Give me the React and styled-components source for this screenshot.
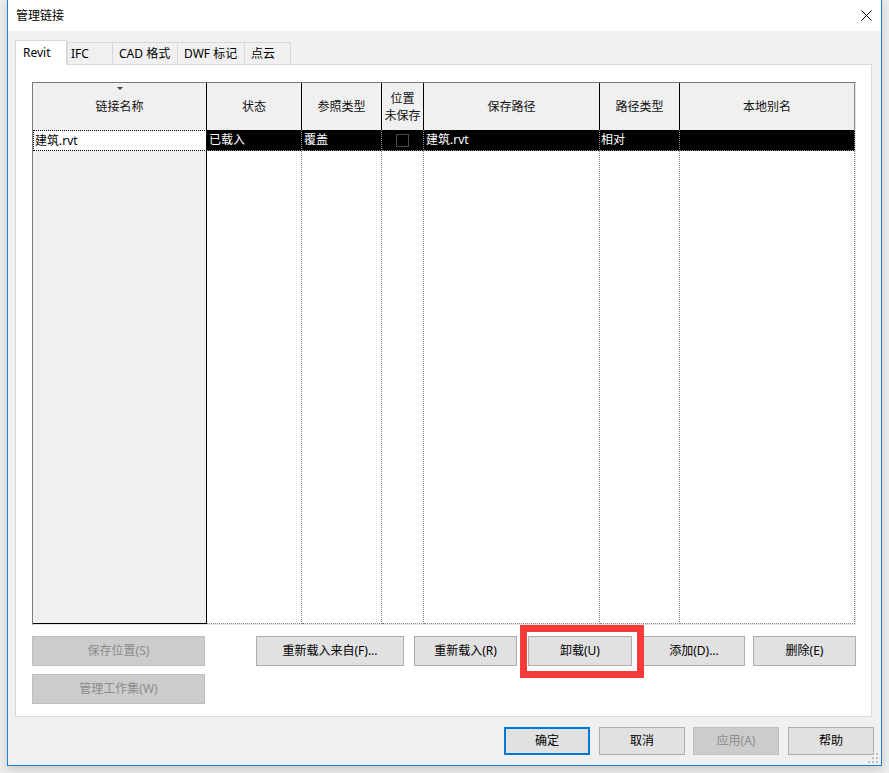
import React from 'react';
import styled, { createGlobalStyle } from 'styled-components';

const Global = createGlobalStyle`
  html, body { margin: 0; padding: 0; }
  body {
    width: 889px; height: 773px; overflow: hidden;
    background: #ededed;
    font-family: "Noto Sans", "Noto Sans CJK SC", sans-serif;
    font-size: 12px; color: #000;
  }
  * { box-sizing: border-box; }
`;

const Page = styled.div`
  width: 889px;
  height: 773px;
  padding-left: 7px;
`;

const Window = styled.div`
  position: relative;
  width: 875px;
  height: 766px;
  display: flex;
  flex-direction: column;
  background: #f0f0f0;
  border: 1px solid #1c7fd6;
  border-top: none;
  box-shadow: 0 3px 9px rgba(0, 0, 0, 0.16);
`;

const TitleBar = styled.div`
  height: 31px;
  flex: none;
  background: #fff;
  display: flex;
  align-items: center;
  justify-content: space-between;
  padding: 0 9px 0 8px;
  line-height: 16px;
`;

const Body = styled.div`
  flex: 1;
  display: flex;
  flex-direction: column;
  padding: 9px 7px 10px 7px;
`;

const TabStrip = styled.div`
  position: relative;
  z-index: 1;
  height: 24px;
  display: flex;
  align-items: flex-end;
`;

const Tab = styled.div`
  width: ${p => p.$w}px;
  height: ${p => (p.$active ? 25 : 22)}px;
  margin-bottom: ${p => (p.$active ? -1 : 0)}px;
  margin-left: ${p => p.$ml || 0}px;
  padding-left: ${p => p.$pl}px;
  padding-top: ${p => (p.$active ? 0 : 1)}px;
  display: flex;
  align-items: center;
  background: ${p => (p.$active ? '#fff' : '#f0f0f0')};
  border: 1px solid #d9d9d9;
  border-bottom: none;
  white-space: nowrap;
  line-height: 16px;
`;

const Panel = styled.div`
  height: 653px;
  margin-right: 2px;
  background: #fff;
  border: 1px solid #d9d9d9;
  padding: 17px 15px 12px 16px;
  display: flex;
  flex-direction: column;
`;

const COLS = '174px 95px 80px 42px 176px 80px 175px';

const GridBox = styled.div`
  width: 824px;
  height: 543px;
  border: 1px solid;
  border-color: #7d7d7d #e3e3e3 #e3e3e3 #7d7d7d;
  display: flex;
  flex-direction: column;
`;

const HeaderRow = styled.div`
  height: 47px;
  display: grid;
  grid-template-columns: ${COLS};
`;

const HeaderCell = styled.div`
  position: relative;
  background: #f0f0f0;
  border-right: 1px solid ${p => (p.$last ? '#8a8a8a' : '#000')};
  display: flex;
  align-items: center;
  justify-content: center;
  text-align: center;
  line-height: 17px;
  color: #111;
`;

const SortArrow = styled.span`
  position: absolute;
  top: 4px;
  left: 50%;
  margin-left: -3px;
  width: 0;
  height: 0;
  border-left: 3px solid transparent;
  border-right: 3px solid transparent;
  border-top: 3px solid #444;
`;

const BodyGrid = styled.div`
  height: 494px;
  display: grid;
  grid-template-columns: ${COLS};
  grid-template-rows: 21px 1fr;
`;

const FocusCell = styled.div`
  background: #fff;
  border: 1px dotted #000;
  border-right-style: solid;
  padding-left: 1px;
  display: flex;
  align-items: center;
  line-height: 16px;
`;

const SelCell = styled.div`
  background: #000;
  color: #fff;
  border-right: 1px dotted #8a8a8a;
  border-bottom: 1px dotted #8a8a8a;
  padding-left: ${p => p.$pl ?? 2}px;
  display: flex;
  align-items: center;
  justify-content: ${p => (p.$center ? 'center' : 'flex-start')};
  line-height: 16px;
  white-space: nowrap;
`;

const CheckBox = styled.span`
  width: 13px;
  height: 13px;
  border: 1px solid #4a4a4a;
  background: #000;
`;

const Filler = styled.div`
  background: ${p => (p.$head ? '#f0f0f0' : '#fff')};
  border-right: 1px ${p => (p.$head ? 'solid #000' : 'dotted #808080')};
  border-bottom: 1px ${p => (p.$head ? 'solid #000' : 'dotted #808080')};
`;

const ActionArea = styled.div`
  margin-top: 11px;
  display: flex;
  align-items: flex-start;
`;

const SideCol = styled.div`
  width: 173px;
  display: flex;
  flex-direction: column;
  gap: 8px;
`;

const ActionRow = styled.div`
  margin-left: 51px;
  display: flex;
  gap: 10px;
`;

const Button = styled.button`
  position: relative;
  width: ${p => p.$w}px;
  height: ${p => p.$h || 30}px;
  margin: 0;
  margin-left: ${p => p.$ml || 0}px;
  padding: 0;
  font-family: inherit;
  font-size: 12px;
  line-height: 16px;
  color: ${p => (p.$disabled ? '#8b8b8b' : '#000')};
  background: ${p => (p.$disabled ? '#cccccc' : '#e1e1e1')};
  border: ${p => (p.$primary ? '2px solid #0078d7' : p.$disabled ? '1px solid #bfbfbf' : '1px solid #adadad')};
  display: flex;
  align-items: center;
  justify-content: center;
  white-space: nowrap;
`;

const Highlight = styled.span`
  position: absolute;
  z-index: 3;
  top: -12px;
  left: -9px;
  right: -13px;
  bottom: -13px;
  border: 7px solid #f63b3b;
  pointer-events: none;
`;

const Footer = styled.div`
  margin-top: 10px;
  display: flex;
  justify-content: flex-end;
  gap: 9px;
`;

const Grip = styled.svg`
  position: absolute;
  right: 2px;
  bottom: 1px;
`;

const cols = ['链接名称', '状态', '参照类型', '位置\n未保存', '保存路径', '路径类型', '本地别名'];

export default function App() {
  return (
    <Page>
      <Global />
      <Window>
        <TitleBar>
          <span>管理链接</span>
          <svg width="11" height="11" viewBox="0 0 11 11">
            <path d="M0.5 0.5 L10.5 10.5 M10.5 0.5 L0.5 10.5" stroke="#000" strokeWidth="1" fill="none" />
          </svg>
        </TitleBar>
        <Body>
          <TabStrip>
            <Tab $active $w={52} $pl={7}>Revit</Tab>
            <Tab $w={46} $pl={3}>IFC</Tab>
            <Tab $w={66} $ml={-1} $pl={6}>CAD 格式</Tab>
            <Tab $w={68} $ml={-1} $pl={6}>DWF 标记</Tab>
            <Tab $w={47} $ml={-1} $pl={6}>点云</Tab>
          </TabStrip>
          <Panel>
            <GridBox>
              <HeaderRow>
                {cols.map((c, i) => (
                  <HeaderCell key={i} $last={i === cols.length - 1}>
                    {i === 0 && <SortArrow />}
                    <span style={{ whiteSpace: 'pre' }}>{c}</span>
                  </HeaderCell>
                ))}
              </HeaderRow>
              <BodyGrid>
                <FocusCell>建筑.rvt</FocusCell>
                <SelCell>已载入</SelCell>
                <SelCell>覆盖</SelCell>
                <SelCell $center $pl={0}><CheckBox /></SelCell>
                <SelCell>建筑.rvt</SelCell>
                <SelCell $pl={1}>相对</SelCell>
                <SelCell />
                <Filler $head />
                <Filler />
                <Filler />
                <Filler />
                <Filler />
                <Filler />
                <Filler />
              </BodyGrid>
            </GridBox>
            <ActionArea>
              <SideCol>
                <Button $w={173} $disabled>保存位置(S)</Button>
                <Button $w={173} $disabled>管理工作集(W)</Button>
              </SideCol>
              <ActionRow>
                <Button $w={148}>重新载入来自(F)...</Button>
                <Button $w={103}>重新载入(R)</Button>
                <Button $w={104} $ml={1}>
                  卸载(U)
                  <Highlight />
                </Button>
                <Button $w={102} $ml={1}>添加(D)...</Button>
                <Button $w={103} $ml={-2}>删除(E)</Button>
              </ActionRow>
            </ActionArea>
          </Panel>
          <Footer>
            <Button $w={86} $h={28} $primary>确定</Button>
            <Button $w={86} $h={28}>取消</Button>
            <Button $w={86} $h={28} $disabled $ml={-1}>应用(A)</Button>
            <Button $w={86} $h={28}>帮助</Button>
          </Footer>
        </Body>
        <Grip width="11" height="11" viewBox="0 0 11 11">
          <g fill="#bdbdbd">
            <rect x="8" y="0" width="2" height="2" />
            <rect x="4" y="4" width="2" height="2" />
            <rect x="8" y="4" width="2" height="2" />
            <rect x="0" y="8" width="2" height="2" />
            <rect x="4" y="8" width="2" height="2" />
            <rect x="8" y="8" width="2" height="2" />
          </g>
        </Grip>
      </Window>
    </Page>
  );
}
